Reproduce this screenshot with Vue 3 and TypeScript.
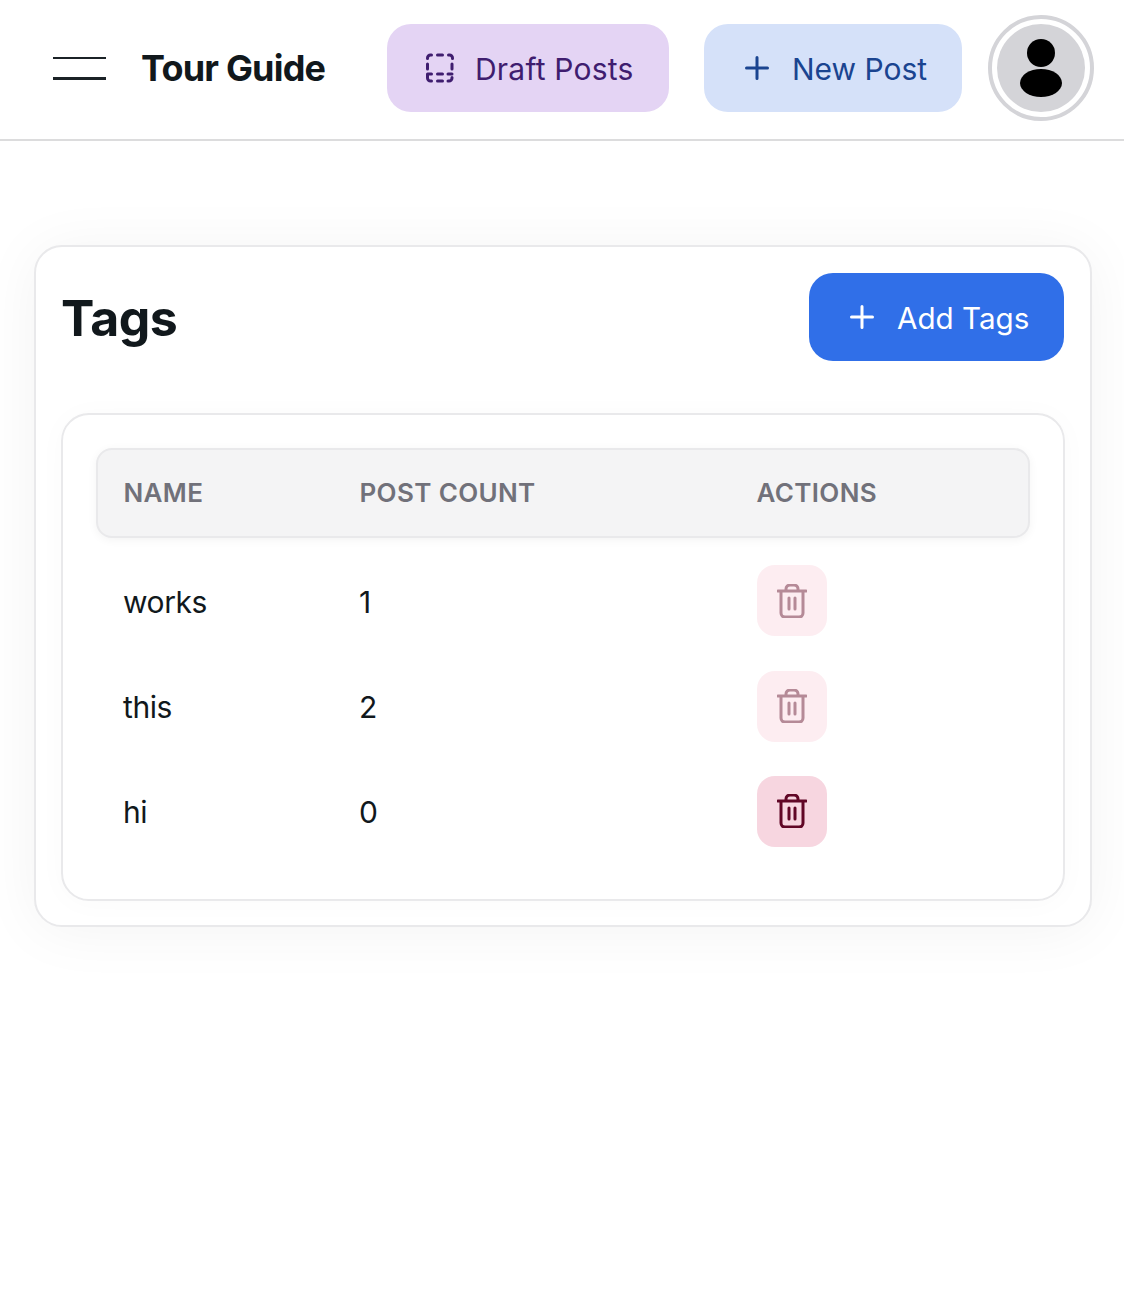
<script setup lang="ts">
interface Tag { name: string; count: number; active: boolean }
const tags: Tag[] = [
  { name: 'works', count: 1, active: false },
  { name: 'this', count: 2, active: false },
  { name: 'hi', count: 0, active: true },
]
</script>

<template>
  <div class="page">
    <header class="topbar">
      <button class="burger" aria-label="Menu"><span></span><span></span></button>
      <div class="brand">Tour Guide</div>
      <button class="pill draft">
        <svg width="36" height="36" viewBox="0 0 36 36" fill="none" stroke="currentColor" stroke-width="3" stroke-linecap="round" stroke-linejoin="round">
          <path d="M5.5 8.5 V8 a3 3 0 0 1 3 -3 h1 M15.5 5 h5 M26.5 5 h1 a3 3 0 0 1 3 3 v.5 M30 14 v5 M5.500 14 v5 M5.500 24 v4 a3 3 0 0 0 3 3 h1 M15.500 31 h5 M26 31 h1 a3 3 0 0 0 3 -3 v-.5 M5.500 24 h4 M15.500 24 h5 M26 24 h4" />
        </svg>
        <span class="label draft-label">Draft Posts</span>
      </button>
      <button class="pill new">
        <svg width="36" height="36" viewBox="0 0 36 36" fill="none" stroke="currentColor" stroke-width="3" stroke-linecap="round"><path d="M18 7.500v21M7.500 18h21"/></svg>
        <span class="label">New Post</span>
      </button>
      <div class="avatar">
        <div class="avatar-in">
          <svg width="44" height="60" viewBox="0 0 44 60"><circle cx="22" cy="15" r="14"/><ellipse cx="22" cy="45" rx="21" ry="14"/></svg>
        </div>
      </div>
    </header>

    <main class="main">
      <section class="card">
        <div class="card-head">
          <h1>Tags</h1>
          <button class="pill add">
            <svg width="36" height="36" viewBox="0 0 36 36" fill="none" stroke="currentColor" stroke-width="3" stroke-linecap="round"><path d="M18 7.500v21M7.500 18h21"/></svg>
            <span class="label">Add Tags</span>
          </button>
        </div>
        <div class="panel">
          <div class="thead row">
            <div>NAME</div><div>POST COUNT</div><div>ACTIONS</div>
          </div>
          <div class="tbody">
            <div v-for="t in tags" :key="t.name" class="row body-row">
              <div class="txt">{{ t.name }}</div>
              <div class="txt">{{ t.count }}</div>
              <div>
                <button class="trash" :class="{ on: t.active }" aria-label="Delete">
                  <svg width="30" height="34" viewBox="0 0 30 34" fill="none" stroke="currentColor" stroke-width="3" stroke-linecap="round" stroke-linejoin="round">
                    <path d="M1 7h28M4 7v22a4 4 0 0 0 4 4h14a4 4 0 0 0 4-4V7M9 7V5a4 4 0 0 1 4-4h4a4 4 0 0 1 4 4v2M12 14v11M18 14v11"/>
                  </svg>
                </button>
              </div>
            </div>
          </div>
        </div>
      </section>
    </main>
  </div>
</template>

<style>
html, body { margin: 0; background: #fff; }
</style>

<style scoped>
.page {
  font-family: Inter, "Liberation Sans", sans-serif;
  color: #11181c;
  min-height: 1298px;
  background: #fff;
}
button { font-family: inherit; border: 0; padding: 0; cursor: pointer; }
.topbar {
  height: 136px;
  padding-bottom: 3px;
  border-bottom: 2px solid #dcdcdd;
  display: flex;
  align-items: center;
  padding-left: 53px;
  padding-right: 30px;
  box-sizing: content-box;
}
.burger {
  width: 53px;
  height: 23px;
  background: none;
  display: flex;
  flex-direction: column;
  justify-content: space-between;
  margin-right: 35px;
  margin-top: 1px;
}
.burger span { display: block; height: 2px; background: #1b2226; width: 100%; }
.burger span:last-child { height: 3px; }
.brand { font-size: 36px; font-weight: 650; width: 246px; letter-spacing: -0.8px; flex: none; }
.pill {
  height: 88px;
  border-radius: 24px;
  display: inline-flex;
  align-items: center;
  font-size: 30px;
  gap: 17px;
  flex: none;
}
.pill svg { flex: none; }
.label { padding-top: 1px; }
.draft-label { letter-spacing: 0.2px; }
.draft { width: 282px; background: #e4d4f4; color: #3f1d6f; padding-left: 35px; box-sizing: border-box; margin-right: 35px; }
.new { width: 258px; background: #d5e1f9; color: #1a4490; padding-left: 35px; box-sizing: border-box; margin-right: 26px; }
.avatar {
  width: 106px; height: 106px; border-radius: 50%;
  border: 4px solid #d4d4d8; box-sizing: border-box;
  display: flex; align-items: center; justify-content: center; flex: none;
}
.avatar-in {
  width: 88px; height: 88px; border-radius: 50%; background: #d4d4d8;
  display: flex; align-items: center; justify-content: center;
}
.main { padding: 104px 32px 0 34px; }
.card {
  border: 2px solid #e9e9eb;
  border-radius: 28px;
  background: #fff;
  box-shadow: 0 4px 60px rgba(0,0,0,.05);
  padding: 26px 25px 25px;
  box-sizing: border-box;
  height: 682px;
}
.card-head { display: flex; justify-content: space-between; align-items: center; height: 88px; margin-bottom: 52px; padding-right: 1px; }
h1 { margin: 0; padding-top: 2px; font-size: 50px; font-weight: 700; letter-spacing: -0.5px; }
.add { width: 255px; background: #306fe8; color: #fff; padding-left: 35px; box-sizing: border-box; font-size: 29.6px; }
.panel {
  border: 2px solid #e9e9eb;
  border-radius: 28px;
  height: 488px;
  box-sizing: border-box;
  padding: 33px 33px 0;
  box-shadow: 0 2px 30px rgba(0,0,0,.025);
}
.row { display: grid; grid-template-columns: 236px 397px 1fr; align-items: center; padding-left: 27px; }
.thead {
  height: 90px;
  box-sizing: border-box;
  background: #f4f4f5;
  border: 2px solid #e9e9eb;
  border-radius: 16px;
  font-size: 26px;
  font-weight: 600;
  letter-spacing: 0.35px;
  color: #71717a;
  padding-left: 25.5px;
  padding-bottom: 2px;
  box-shadow: 0 2px 10px rgba(0,0,0,.05);
}
.tbody { padding-top: 10px; }
.body-row { height: 105.4px; font-size: 30px; letter-spacing: -0.4px; color: #11181c; }
.txt { padding-top: 2px; }
.trash {
  width: 70px; height: 71px; border-radius: 18px; margin-left: 1px;
  background: #fdedf1; color: #b58a97;
  display: flex; align-items: center; justify-content: center;
}
.trash.on { background: #f7d6e0; color: #610726; }
</style>
